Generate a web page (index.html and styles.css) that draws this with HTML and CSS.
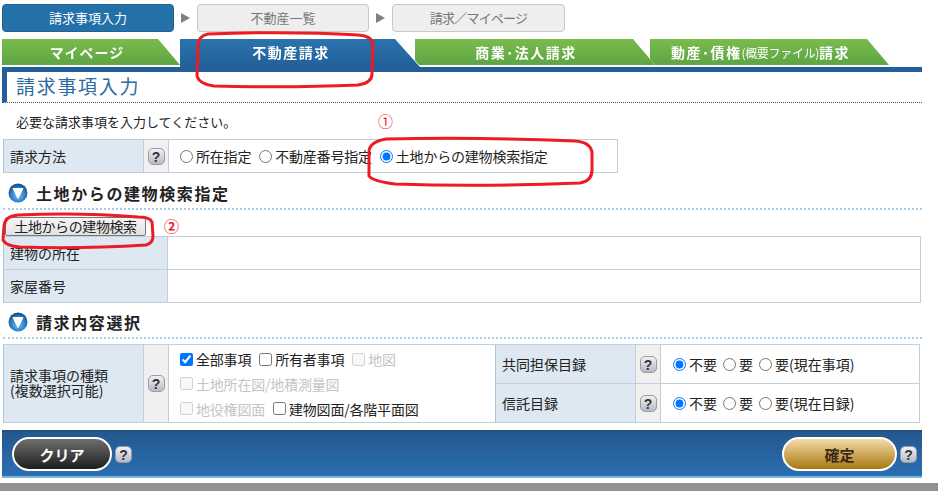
FILE: index.html
```html
<!DOCTYPE html>
<html lang="ja">
<head>
    <meta charset="utf-8">
    <title>請求事項入力</title>
    <link rel="stylesheet" href="styles.css">
</head>
<body>
    <svg width="0" height="0" class="defs">
        <defs>
            <radialGradient id="ballFill" cx="0.5" cy="0.62" r="0.6">
                <stop offset="0" stop-color="#7fc0ee"/>
                <stop offset="0.6" stop-color="#2f82c8"/>
                <stop offset="1" stop-color="#0f4f8c"/>
            </radialGradient>
        </defs>
    </svg>

    <div class="page">
        <div class="steps">
            <div class="step current">請求事項入力</div>
            <div class="arrow"></div>
            <div class="step">不動産一覧</div>
            <div class="arrow"></div>
            <div class="step last">請求／マイページ</div>
        </div>

        <div class="tabs">
            <div class="tab tab1"><div class="tabFace">マイページ</div></div>
            <div class="tab tab2 active"><div class="tabFace">不動産請求</div></div>
            <div class="tab tab3"><div class="tabFace">商業･法人請求</div></div>
            <div class="tab tab4"><div class="tabFace">動産･債権<small>(概要ファイル)</small>請求</div></div>
        </div>
        <div class="tabLine"></div>

        <h1 class="title">請求事項入力</h1>
        <p class="intro">必要な請求事項を入力してください。<span class="mark1">①</span></p>

        <div class="row methodRow">
            <div class="th method">請求方法</div>
            <div class="help"><span class="q">?</span></div>
            <div class="td">
                <label><input type="radio" name="method">所在指定</label>
                <label><input type="radio" name="method">不動産番号指定</label>
                <label><input type="radio" name="method" checked>土地からの建物検索指定</label>
            </div>
        </div>

        <h2 class="heading first">
            <svg class="ball" width="20" height="20" viewBox="0 0 20 20"><circle cx="10" cy="10" r="9.5" fill="url(#ballFill)"/><path d="M5 5.5h10L10 15.5z" fill="#fff" stroke="#fff" stroke-linejoin="round"/></svg>
            土地からの建物検索指定
        </h2>
        <div class="searchBar">
            <button class="searchBtn">土地からの建物検索</button>
            <span class="mark2">②</span>
        </div>
        <div class="addr">
            <div class="addrRow"><div class="th wide">建物の所在</div><div class="td"></div></div>
            <div class="addrRow"><div class="th wide">家屋番号</div><div class="td"></div></div>
        </div>

        <h2 class="heading second">
            <svg class="ball" width="20" height="20" viewBox="0 0 20 20"><circle cx="10" cy="10" r="9.5" fill="url(#ballFill)"/><path d="M5 5.5h10L10 15.5z" fill="#fff" stroke="#fff" stroke-linejoin="round"/></svg>
            請求内容選択
        </h2>

        <div class="detail">
            <div class="th kind">請求事項の種類<br>(複数選択可能)</div>
            <div class="help"><span class="q">?</span></div>
            <div class="kinds">
                <div><label><input type="checkbox" checked>全部事項</label><label><input type="checkbox">所有者事項</label><label class="off"><input type="checkbox" disabled>地図</label></div>
                <div><label class="off"><input type="checkbox" disabled>土地所在図/地積測量図</label></div>
                <div><label class="off"><input type="checkbox" disabled>地役権図面</label><label><input type="checkbox">建物図面/各階平面図</label></div>
            </div>
            <div class="lists">
                <div class="listRow">
                    <div class="th list">共同担保目録</div>
                    <div class="help"><span class="q">?</span></div>
                    <div class="td tight">
                        <label><input type="radio" name="kyodo" checked>不要</label>
                        <label><input type="radio" name="kyodo">要</label>
                        <label><input type="radio" name="kyodo">要(現在事項)</label>
                    </div>
                </div>
                <div class="listRow">
                    <div class="th list">信託目録</div>
                    <div class="help"><span class="q">?</span></div>
                    <div class="td tight">
                        <label><input type="radio" name="shintaku" checked>不要</label>
                        <label><input type="radio" name="shintaku">要</label>
                        <label><input type="radio" name="shintaku">要(現在目録)</label>
                    </div>
                </div>
            </div>
        </div>

        <div class="footer">
            <div class="group">
                <button class="pill clear">クリア</button>
                <span class="q">?</span>
            </div>
            <div class="group">
                <button class="pill ok">確定</button>
                <span class="q">?</span>
            </div>
        </div>
    </div>
    <div class="greyBar"></div>

    <!-- red marker rings drawn over the page -->
    <svg class="marker" width="938" height="491" viewBox="0 0 938 491" fill="none">
        <path d="M208 34 Q198 36 198 46 L197 76 Q199 84 214 86 Q290 88 358 85 Q372 83 372 74 L373 44 Q372 36 358 35 Q290 31 208 34Z"/>
        <path d="M386 139 Q369 142 369 152 L369 176 Q372 181 395 184 Q480 187 580 183 Q592 181 592 170 L592 152 Q590 142 575 141 Q480 137 386 139Z"/>
        <path d="M18 215 Q5 216 4 226 L3 240 Q6 246 20 247 Q80 249 146 245 Q153 243 153 236 L152 222 Q150 217 138 217 Q80 212 18 215Z"/>
    </svg>
</body>
</html>
```

FILE: styles.css
```css
* {
    margin: 0;
    padding: 0;
    box-sizing: border-box;
}

html, body {
    height: 491px;
    overflow: hidden;
}

body {
    position: relative;
    background: #fff;
    color: #222;
    font-family: "Noto Sans CJK JP", "Liberation Sans", sans-serif;
    font-size: 14px;
}

.defs {
    display: block;
}

.page {
    width: 924px;
    height: 483px;
    padding: 4px 0 0 2px;
}

/* step bar */
.steps {
    display: flex;
    align-items: center;
    height: 28px;
}

.step {
    width: 172px;
    height: 28px;
    line-height: 26px;
    text-align: center;
    font-size: 13px;
    color: #777;
    background: #eee;
    border: 1px solid #c8c8c8;
    border-radius: 4px;
}

.step.current {
    color: #fff;
    background: #2470a9;
    border-color: #1f6297;
}

.step.last {
    width: 173px;
    letter-spacing: -0.8px;
}

.arrow {
    width: 0;
    height: 0;
    margin: 0 7px;
    border-left: 9px solid #808080;
    border-top: 5px solid transparent;
    border-bottom: 5px solid transparent;
}

/* tabs */
.tabs {
    display: flex;
    height: 28px;
    margin-top: 7px;
}

.tab {
    position: relative;
    height: 26px;
    margin-right: -5px;
    filter: drop-shadow(1px 1px 0 #fff);
}

.tab1 { width: 178px; margin-right: 0; z-index: 1; }
.tab2 { width: 240px; height: 28px; z-index: 4; filter: drop-shadow(1px 0 0 #fff); }
.tab3 { width: 240px; z-index: 3; }
.tab4 { width: 239px; z-index: 2; }

.tabFace {
    height: 100%;
    padding-right: 22px;
    line-height: 26px;
    text-align: center;
    font-size: 14px;
    font-weight: 700;
    letter-spacing: 1.5px;
    color: #fff;
    background: linear-gradient(#7abb4b, #5da544);
    clip-path: polygon(0 0, calc(100% - 22px) 0, 100% 100%, 0 100%);
}

.tab1 .tabFace {
    padding-right: 8px;
    letter-spacing: 1px;
}

.tab2 .tabFace {
    padding-right: 18px;
    background: linear-gradient(#2b74ae, #235f98);
    clip-path: polygon(0 0, 215px 0, 240px 28px, 0 28px);
}

.tab3 .tabFace {
    padding-right: 18px;
}

.tab4 .tabFace {
    padding-right: 18px;
}

.tabFace small {
    font-size: 12px;
    font-weight: 400;
    letter-spacing: -0.3px;
}

.tabLine {
    width: 920px;
    height: 5px;
    background: #235f98;
}

.title {
    height: 31px;
    padding-left: 9px;
    border-left: 5px solid #235f98;
    border-bottom: 1px dotted #555;
    width: 920px;
    font-size: 19px;
    font-weight: 400;
    line-height: 28px;
    letter-spacing: 1.7px;
    color: #2d6a9f;
}

.intro {
    position: relative;
    height: 36px;
    padding: 9px 0 0 14px;
    font-size: 13px;
    line-height: 19px;
}

.mark1 {
    position: absolute;
    left: 376px;
    top: 8px;
    font-size: 15px;
    color: #ed1c24;
}

/* rows */
.row {
    display: flex;
    width: 615px;
    height: 34px;
    margin-left: 1px;
    border: 1px solid #c4ced8;
    border-width: 1px 1px 1px 0;
}

.th {
    display: flex;
    align-items: center;
    padding-left: 6px;
    background: #dde8f2;
    border-left: 1px solid #a8c4de;
    line-height: 1;
}

.method {
    width: 140px;
}

.help {
    display: flex;
    align-items: center;
    justify-content: center;
    width: 26px;
    flex: none;
    background: #f0f0f0;
    border-left: 1px solid #c4ced8;
    border-right: 1px solid #c4ced8;
}

.q {
    display: inline-block;
    width: 17px;
    height: 17px;
    line-height: 16px;
    text-align: center;
    font-family: "Liberation Sans", sans-serif;
    font-size: 14px;
    font-weight: 700;
    color: #333;
    background: linear-gradient(#f0f1f5, #b6bac4);
    border: 1px solid #9a9da6;
    border-radius: 5px;
}

.td {
    display: flex;
    flex: 1;
    align-items: center;
    padding-left: 10px;
    white-space: nowrap;
    letter-spacing: -0.2px;
}

label {
    display: inline-flex;
    align-items: center;
    margin-right: 7px;
}

input {
    width: 13px;
    height: 13px;
    margin: 0 3px 0 1px;
    flex: none;
}

.heading {
    display: flex;
    align-items: center;
    gap: 8px;
    width: 919px;
    margin-left: 1px;
    height: 37px;
    padding: 4px 0 0 5px;
    border-bottom: 2px dotted #a9cde6;
    font-size: 16px;
    font-weight: 700;
    letter-spacing: 1.6px;
    color: #222;
}

.ball {
    flex: none;
}

.searchBar {
    display: flex;
    align-items: flex-start;
    height: 26px;
    padding: 7px 0 0 3px;
}

.searchBtn {
    width: 141px;
    height: 19px;
    font-family: inherit;
    font-size: 14px;
    line-height: 15px;
    letter-spacing: -0.4px;
    color: #222;
    background: linear-gradient(#f6f6f6, #e2e2e2);
    border: 1px solid #777;
    border-radius: 2px;
}

.mark2 {
    margin-left: 18px;
    font-size: 15px;
    line-height: 18px;
    font-weight: 700;
    color: #ed1c24;
}

.addr {
    width: 918px;
    margin-left: 1px;
    border-top: 1px solid #c4ced8;
}

.addrRow {
    display: flex;
    height: 33px;
    border-right: 1px solid #c4ced8;
    border-bottom: 1px solid #c4ced8;
}

.wide {
    width: 165px;
    border-right: 1px solid #c4ced8;
}

.second {
    height: 36px;
}

.detail {
    display: flex;
    width: 917px;
    height: 79px;
    margin: 5px 0 0 1px;
    border: 1px solid #c4ced8;
    border-left: 0;
}

.kind {
    width: 140px;
    line-height: 15px;
    padding-bottom: 2px;
}

.kinds {
    display: flex;
    flex-direction: column;
    justify-content: space-around;
    width: 326px;
    padding: 2px 0 1px 10px;
    letter-spacing: -0.2px;
}

.kinds > div {
    display: flex;
    height: 23px;
    align-items: center;
}

.off {
    color: #c4c4c4;
}

.lists {
    flex: 1;
    display: flex;
    flex-direction: column;
}

.listRow {
    flex: 1;
    display: flex;
}

.listRow + .listRow {
    border-top: 1px solid #c4ced8;
}

.list {
    width: 140px;
}

.tight {
    padding-left: 11px;
    letter-spacing: 0;
}

.tight label {
    margin-right: 5px;
}

.footer {
    display: flex;
    align-items: center;
    justify-content: space-between;
    width: 920px;
    height: 48px;
    margin-top: 7px;
    padding: 0 5px 0 10px;
    background: linear-gradient(#24588f, #2a6fb2);
    border-top: 2px solid #234f80;
    border-bottom: 2px solid #7fb2d8;
}

.group {
    display: flex;
    align-items: center;
    gap: 3px;
}

.pill {
    height: 34px;
    font-family: inherit;
    font-size: 15px;
    font-weight: 700;
    border: 2px solid #fff;
    border-radius: 17px;
}

.clear {
    width: 100px;
    color: #fff;
    background: linear-gradient(#6f6f6f, #1d1d1d);
}

.ok {
    width: 115px;
    color: #3a2a15;
    background: linear-gradient(#f4dca8, #a97710);
}

.greyBar {
    height: 8px;
    background: #929295;
}

/* drawn on top of the form, page coordinates */
.marker {
    position: absolute;
    left: 0;
    top: 0;
    z-index: 10;
    pointer-events: none;
}

.marker path {
    stroke: #ed1c24;
    stroke-width: 3;
}
```
